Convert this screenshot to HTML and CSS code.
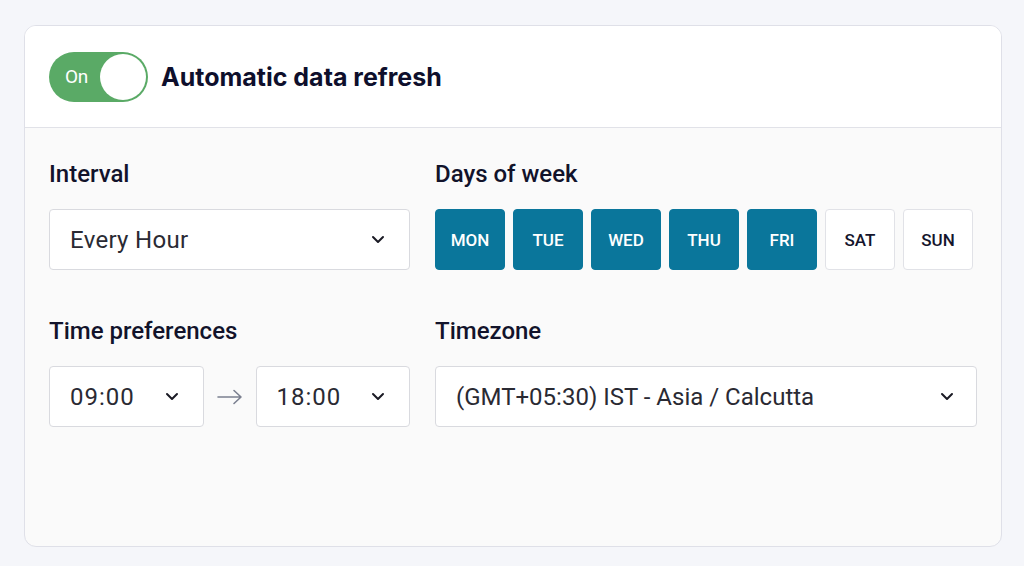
FILE: index.html
```html
<!DOCTYPE html>
<html lang="en">
<head>
<meta charset="utf-8">
<title>Automatic data refresh</title>
<link rel="stylesheet" href="styles.css">
</head>
<body>
<div class="card">
  <div class="card-header">
    <div class="toggle">
      <span class="toggle-label">On</span>
      <span class="toggle-knob"></span>
    </div>
    <h1 class="title">Automatic data refresh</h1>
  </div>
  <div class="card-body">
    <div class="field">
      <div class="label">Interval</div>
      <div class="select">
        <span>Every Hour</span>
        <svg class="chev" viewBox="0 0 14 9" width="14" height="9"><path d="M2 2l5 5 5-5" fill="none" stroke="#1a1a24" stroke-width="2" stroke-linecap="round" stroke-linejoin="round"/></svg>
      </div>
    </div>
    <div class="field">
      <div class="label">Days of week</div>
      <div class="days">
        <span class="day on">MON</span>
        <span class="day on">TUE</span>
        <span class="day on">WED</span>
        <span class="day on">THU</span>
        <span class="day on">FRI</span>
        <span class="day">SAT</span>
        <span class="day">SUN</span>
      </div>
    </div>
    <div class="field">
      <div class="label">Time preferences</div>
      <div class="time-row">
        <div class="select small">
          <span>09:00</span>
          <svg class="chev" viewBox="0 0 14 9" width="14" height="9"><path d="M2 2l5 5 5-5" fill="none" stroke="#1a1a24" stroke-width="2" stroke-linecap="round" stroke-linejoin="round"/></svg>
        </div>
        <svg class="arrow" viewBox="0 0 26 16" width="26" height="16"><path d="M1 8h23M17 1.5l7 6.5-7 6.5" fill="none" stroke="#7b8090" stroke-width="1.6" stroke-linecap="round" stroke-linejoin="round"/></svg>
        <div class="select small">
          <span>18:00</span>
          <svg class="chev" viewBox="0 0 14 9" width="14" height="9"><path d="M2 2l5 5 5-5" fill="none" stroke="#1a1a24" stroke-width="2" stroke-linecap="round" stroke-linejoin="round"/></svg>
        </div>
      </div>
    </div>
    <div class="field">
      <div class="label">Timezone</div>
      <div class="select tz">
        <span>(GMT+05:30) IST - Asia / Calcutta</span>
        <svg class="chev" viewBox="0 0 14 9" width="14" height="9"><path d="M2 2l5 5 5-5" fill="none" stroke="#1a1a24" stroke-width="2" stroke-linecap="round" stroke-linejoin="round"/></svg>
      </div>
    </div>
  </div>
</div>
</body>
</html>
```
FILE: styles.css
```css
* { box-sizing: border-box; }
html, body { margin: 0; padding: 0; }
body {
  background: #f5f6fa;
  padding: 25px 22px 0 24px;
  font-family: Roboto, "Liberation Sans", sans-serif;
  color: #12132b;
}
.card {
  width: 978px;
  height: 522px;
  background: #fafafa;
  border: 1px solid #dfe0e8;
  border-radius: 12px;
  overflow: hidden;
}
.card-header {
  height: 102px;
  background: #ffffff;
  border-bottom: 1px solid #e1e2e8;
  display: flex;
  align-items: center;
  padding-left: 24px;
  gap: 13px;
}
.toggle {
  width: 99px;
  height: 50px;
  border-radius: 25px;
  background: #5aaa66;
  display: flex;
  align-items: center;
  justify-content: space-between;
  padding: 0 2px 0 16px;
}
.toggle-label {
  color: #ffffff;
  font-family: Roboto, sans-serif;
  font-size: 19px;
  letter-spacing: -0.3px;
}
.toggle-knob {
  width: 46px;
  height: 46px;
  border-radius: 50%;
  background: #ffffff;
}
.title {
  margin: 0;
  font-family: Inter, "Liberation Sans", sans-serif;
  font-weight: 700;
  font-size: 25px;
  letter-spacing: 0;
  color: #0e0f2c;
}
.card-body {
  display: grid;
  grid-template-columns: 361px 1fr;
  column-gap: 25px;
  row-gap: 47px;
  padding: 32px 24px 0 24px;
}
.label {
  font-size: 24px;
  font-weight: 500;
  line-height: 28px;
  color: #12132b;
  margin-bottom: 21px;
  letter-spacing: 0;
}
.select {
  height: 61px;
  background: #ffffff;
  border: 1px solid #d9dadf;
  border-radius: 4px;
  display: flex;
  align-items: center;
  justify-content: space-between;
  padding: 0 24px 0 20px;
  font-size: 24px;
  letter-spacing: 0.3px;
  color: #2a2a33;
}
.select.small { width: 155px; }
.select.small span { letter-spacing: 1px; }
.chev { flex: none; }
.time-row {
  display: flex;
  align-items: center;
  gap: 13px;
}
.arrow { flex: none; }
.days {
  display: flex;
  gap: 8px;
}
.day {
  width: 70px;
  height: 61px;
  border-radius: 4px;
  border: 1px solid #e1e2e7;
  background: #ffffff;
  display: flex;
  align-items: center;
  justify-content: center;
  font-size: 17px;
  font-weight: 500;
  color: #14152c;
}
.day.on {
  background: #0a769b;
  border-color: #0a769b;
  color: #ffffff;
}
.select.tz { width: 542px; padding-right: 22px; letter-spacing: 0; }
```
